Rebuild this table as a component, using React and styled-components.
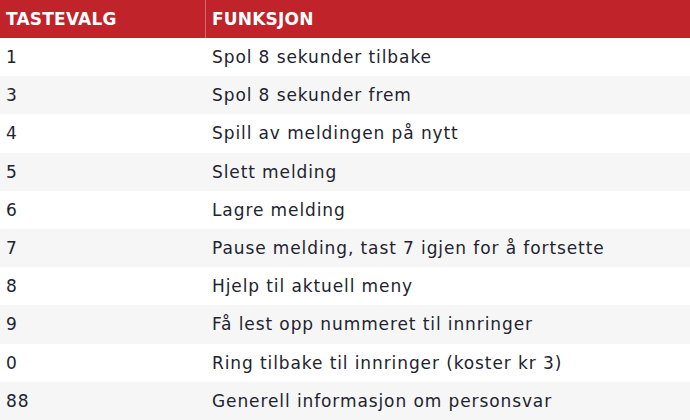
import React from "react";
import styled, { createGlobalStyle } from "styled-components";

const GlobalStyle = createGlobalStyle`
  html, body {
    margin: 0;
    padding: 0;
    background: #ffffff;
  }
  body {
    font-family: "DejaVu Sans", "Open Sans", sans-serif;
  }
`;

const Table = styled.table`
  width: 690px;
  border-collapse: collapse;
  table-layout: fixed;
  color: #23232f;
`;

const HeadRow = styled.tr`
  background: #c1232a;
  height: 38px;
`;

const HeadCell = styled.th`
  width: ${({ w }) => w || "auto"};
  padding: 0 6px;
  text-align: left;
  font-size: 17px;
  font-weight: 600;
  letter-spacing: 0.2px;
  color: #ffffff;
  border-left: ${({ first }) => (first ? "none" : "1px solid #d9676b")};
`;

const Row = styled.tr`
  height: 38.2px;
  background: ${({ odd }) => (odd ? "#f6f6f6" : "#ffffff")};
`;

const Cell = styled.td`
  padding: 0 6px;
  font-size: 17px;
  font-weight: 400;
  letter-spacing: 0.9px;
  border-left: ${({ first }) => (first ? "none" : "1px solid transparent")};
`;

const rows = [
  ["1", "Spol 8 sekunder tilbake"],
  ["3", "Spol 8 sekunder frem"],
  ["4", "Spill av meldingen på nytt"],
  ["5", "Slett melding"],
  ["6", "Lagre melding"],
  ["7", "Pause melding, tast 7 igjen for å fortsette"],
  ["8", "Hjelp til aktuell meny"],
  ["9", "Få lest opp nummeret til innringer"],
  ["0", "Ring tilbake til innringer (koster kr 3)"],
  ["88", "Generell informasjon om personsvar"],
];

export default function App() {
  return (
    <>
      <GlobalStyle />
      <Table>
        <thead>
          <HeadRow>
            <HeadCell first w="193px">TASTEVALG</HeadCell>
            <HeadCell>FUNKSJON</HeadCell>
          </HeadRow>
        </thead>
        <tbody>
          {rows.map(([key, text], i) => (
            <Row key={key} odd={i % 2 === 1}>
              <Cell first>{key}</Cell>
              <Cell>{text}</Cell>
            </Row>
          ))}
        </tbody>
      </Table>
    </>
  );
}
